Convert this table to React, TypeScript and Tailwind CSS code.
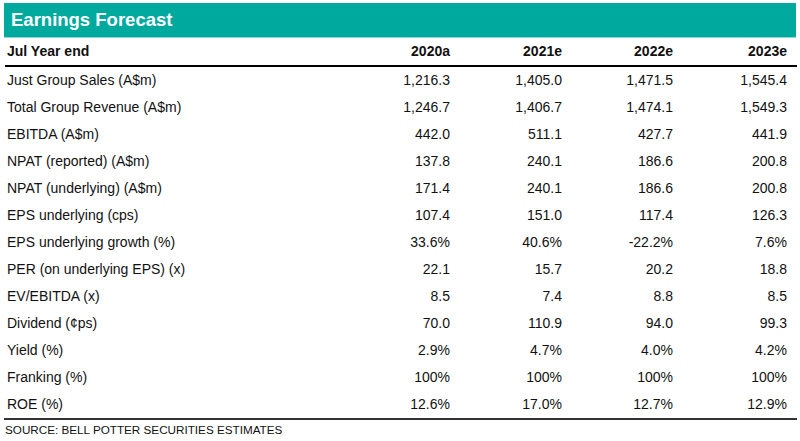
import React from 'react';

const rows: [string, string, string, string, string][] = [
  ['Just Group Sales (A$m)', '1,216.3', '1,405.0', '1,471.5', '1,545.4'],
  ['Total Group Revenue (A$m)', '1,246.7', '1,406.7', '1,474.1', '1,549.3'],
  ['EBITDA (A$m)', '442.0', '511.1', '427.7', '441.9'],
  ['NPAT (reported) (A$m)', '137.8', '240.1', '186.6', '200.8'],
  ['NPAT (underlying) (A$m)', '171.4', '240.1', '186.6', '200.8'],
  ['EPS underlying (cps)', '107.4', '151.0', '117.4', '126.3'],
  ['EPS underlying growth (%)', '33.6%', '40.6%', '-22.2%', '7.6%'],
  ['PER (on underlying EPS) (x)', '22.1', '15.7', '20.2', '18.8'],
  ['EV/EBITDA (x)', '8.5', '7.4', '8.8', '8.5'],
  ['Dividend (¢ps)', '70.0', '110.9', '94.0', '99.3'],
  ['Yield (%)', '2.9%', '4.7%', '4.0%', '4.2%'],
  ['Franking (%)', '100%', '100%', '100%', '100%'],
  ['ROE (%)', '12.6%', '17.0%', '12.7%', '12.9%'],
];

const cols = 'grid grid-cols-[331px_112px_112px_111px_114px] items-center';

export default function App() {
  return (
    <div className="w-[800px] h-[441px] bg-white pt-[3px] font-['Liberation_Sans',Arial,sans-serif] text-[#111]">
      <div className="mx-[4px] h-[35px] bg-[#00a99d] border-b border-[#8fd8d2] flex items-center pl-[7px]">
        <h1 className="text-[18.5px] font-bold text-white">Earnings Forecast</h1>
      </div>

      <div className="ml-[5px] mr-[3px] border-b-2 border-black">
        <div className={`${cols} h-[27px] pl-[2px] text-[14px] font-bold`}>
          <span>Jul Year end</span>
          <span className="text-right">2020a</span>
          <span className="text-right">2021e</span>
          <span className="text-right">2022e</span>
          <span className="text-right">2023e</span>
        </div>
      </div>

      <div className="ml-[4px] mr-[3px] border-b-2 border-[#333]">
        {rows.map(([label, ...vals]) => (
          <div key={label} className={`${cols} h-[27px] pl-[3px] text-[14px]`}>
            <span>{label}</span>
            {vals.map((v, i) => (
              <span key={i} className="text-right">{v}</span>
            ))}
          </div>
        ))}
      </div>

      <p className="pl-[5px] pt-[3px] text-[11.7px] leading-[14px] uppercase">
        Source: Bell Potter Securities Estimates
      </p>
    </div>
  );
}
